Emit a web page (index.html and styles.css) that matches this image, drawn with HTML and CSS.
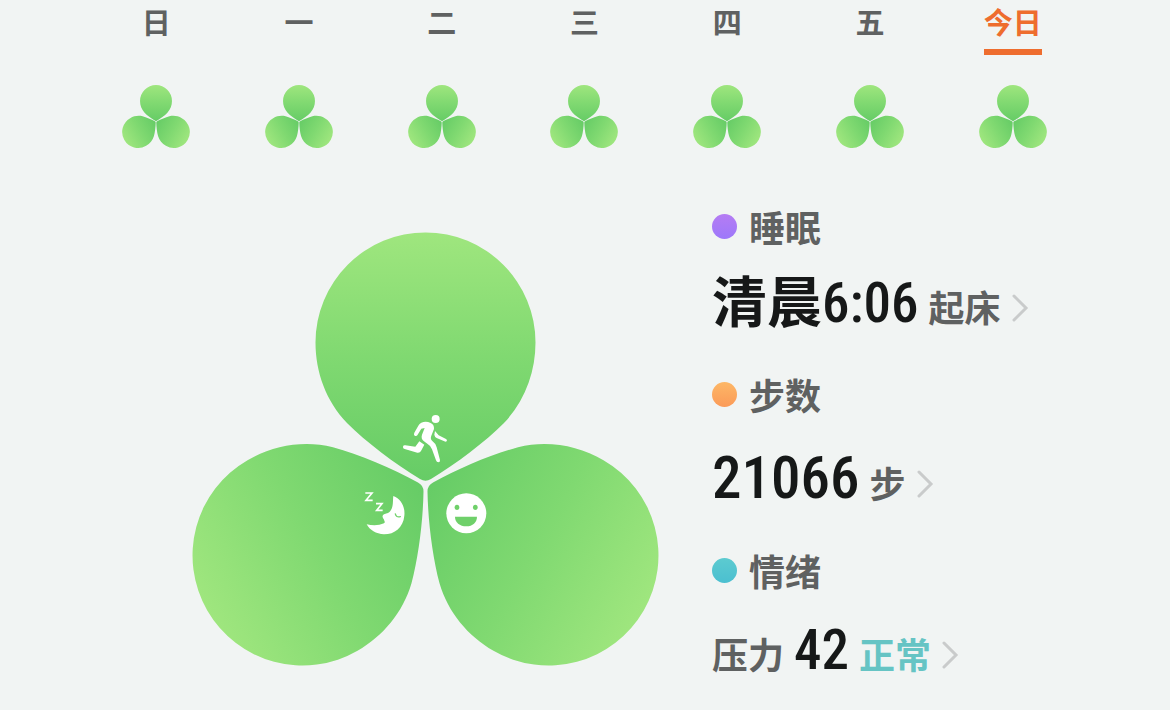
FILE: index.html
```html
<!DOCTYPE html>
<html lang="zh-CN">
<head>
<meta charset="utf-8">
<meta name="viewport" content="width=device-width, initial-scale=1">
<title>健康三叶草</title>
<link rel="stylesheet" href="styles.css">
</head>
<body>
<svg class="defs" width="0" height="0" aria-hidden="true">
  <defs>
    <linearGradient id="leaf" gradientUnits="userSpaceOnUse" x1="0" y1="232" x2="0" y2="482">
      <stop offset="0" stop-color="#9fe67e"/>
      <stop offset="0.5" stop-color="#80d971"/>
      <stop offset="1" stop-color="#66cc66"/>
    </linearGradient>
    <path id="petal" fill="url(#leaf)" d="M315.500 342.500A110 110 0 0 1 535.500 342.500C535.500 372 525 401 504 423C485 442 456 464 431 479Q425.500 482.500 420 479C395 464 366 442 347 423C326 401 315.500 372 315.500 342.500Z"/>
    <symbol id="clover" viewBox="192 232 467 434">
      <use href="#petal"/>
      <use href="#petal" transform="rotate(120 425.500 484.500)"/>
      <use href="#petal" transform="rotate(240 425.500 484.500)"/>
    </symbol>
  </defs>
</svg>

<nav class="week" aria-label="星期">
  <button class="day" type="button"><span class="day-name">日</span><svg class="day-clover" aria-hidden="true"><use href="#clover"/></svg></button>
  <button class="day" type="button"><span class="day-name">一</span><svg class="day-clover" aria-hidden="true"><use href="#clover"/></svg></button>
  <button class="day" type="button"><span class="day-name">二</span><svg class="day-clover" aria-hidden="true"><use href="#clover"/></svg></button>
  <button class="day" type="button"><span class="day-name">三</span><svg class="day-clover" aria-hidden="true"><use href="#clover"/></svg></button>
  <button class="day" type="button"><span class="day-name">四</span><svg class="day-clover" aria-hidden="true"><use href="#clover"/></svg></button>
  <button class="day" type="button"><span class="day-name">五</span><svg class="day-clover" aria-hidden="true"><use href="#clover"/></svg></button>
  <button class="day day-today" type="button" aria-current="date"><span class="day-name">今日</span><svg class="day-clover" aria-hidden="true"><use href="#clover"/></svg></button>
</nav>

<main class="overview">
  <svg class="big-clover" viewBox="192 232 467 434" role="img" aria-label="三叶草">
    <use href="#petal"/>
    <use href="#petal" transform="rotate(120 425.500 484.500)"/>
    <use href="#petal" transform="rotate(240 425.500 484.500)"/>
    <g transform="translate(340 400) scale(0.3333)" fill="#fff">
      <!-- runner -->
      <circle cx="287" cy="57" r="12"/>
      <path d="M244 68Q258 62 272 69Q283 74 282 87L274 107Q270 117 277 123Q287 130 290 142L300 180Q301 187 295 187Q290 187 288 181L276 148Q272 137 263 132L252 124Q242 116 246 104L254 84L244 86L232 106Q229 110 224 107Q220 104 223 98L235 77Q238 71 244 68Z"/>
      <path d="M285 93L296 106L318 117Q323 120 320 124Q317 126 313 124L290 114Q284 111 283 104Z"/>
      <path d="M238 124L253 134L243 153Q240 159 232 158L194 147Q188 145 189 140Q190 135 196 136L226 140Z"/>
      <!-- sleeping moon -->
      <path d="M160 288C184 297 196 322 193 347C190 382 164 403 132 403C108 402 89 390 80 373C98 377 117 377 132 370C136 367 134 364 132 360C133 357 126 353 128 347C131 340 145 342 151 333C161 320 158 304 160 288Z"/>
      <path d="M166 342Q168 353 181 350" fill="none" stroke="#70d16a" stroke-width="4" stroke-linecap="round"/>
      <path d="M76 279H96L78 301H98M108 311H126L110 331H128" fill="none" stroke="#fff" stroke-width="5"/>
      <!-- smiling face -->
      <circle cx="379" cy="340" r="60"/>
      <g fill="#6fd06a">
        <ellipse cx="351" cy="322" rx="7" ry="8"/>
        <ellipse cx="406" cy="322" rx="7" ry="8"/>
        <path d="M345 350H411C411 367 398 379 379 379C359 379 345 367 345 350Z"/>
      </g>
    </g>
  </svg>

  <div class="metrics">
    <section class="metric">
      <h2 class="metric-title"><span class="dot dot-sleep"></span>睡眠</h2>
      <a class="metric-value" href="#sleep">
        <span class="reading"><strong class="period">清晨</strong><span class="number">6:06</span></span>
        <span class="unit">起床</span>
        <svg class="chevron" viewBox="0 0 18 28" aria-hidden="true"><path d="M3 2L15 14L3 26"/></svg>
      </a>
    </section>
    <section class="metric">
      <h2 class="metric-title"><span class="dot dot-steps"></span>步数</h2>
      <a class="metric-value" href="#steps">
        <span class="number number-large">21066</span>
        <span class="unit">步</span>
        <svg class="chevron" viewBox="0 0 18 28" aria-hidden="true"><path d="M3 2L15 14L3 26"/></svg>
      </a>
    </section>
    <section class="metric">
      <h2 class="metric-title"><span class="dot dot-mood"></span>情绪</h2>
      <a class="metric-value" href="#mood">
        <span class="unit">压力</span>
        <span class="number">42</span>
        <span class="unit unit-normal">正常</span>
        <svg class="chevron" viewBox="0 0 18 28" aria-hidden="true"><path d="M3 2L15 14L3 26"/></svg>
      </a>
    </section>
  </div>
</main>
</body>
</html>
```
FILE: styles.css
```css
* {
  box-sizing: border-box;
}

body {
  margin: 0;
  background: #f1f4f3;
  color: #161818;
  font-family: "Noto Sans CJK SC", sans-serif;
}

.defs {
  position: absolute;
}

.week {
  display: grid;
  grid-template-columns: repeat(7, 1fr);
  padding: 0 86px 0 85px;
}

.day {
  display: flex;
  flex-direction: column;
  align-items: center;
  gap: 30px;
  padding: 0;
  border: 0;
  background: none;
  color: #5f6161;
  font: inherit;
}

.day-name {
  height: 55px;
  border-bottom: 6px solid transparent;
  font-size: 29px;
  font-weight: 700;
  line-height: 42px;
}

.day-today .day-name {
  border-color: #ee6d2e;
  color: #ee6d2e;
}

.day-clover {
  width: 68px;
  height: 63px;
}

.overview {
  display: grid;
  grid-template-columns: 467px 1fr;
  column-gap: 53px;
  padding: 54px 85px 0 192px;
}

.big-clover {
  width: 100%;
  margin-top: 30px;
}

.metrics {
  display: flex;
  flex-direction: column;
  gap: 18px;
}

.metric-title {
  display: flex;
  align-items: center;
  gap: 12px;
  margin: 0 0 2px;
  color: #5f6161;
  font-size: 36px;
  font-weight: 700;
  line-height: 48px;
}

.metric + .metric .metric-title {
  margin-bottom: 10px;
}

.dot {
  width: 25px;
  height: 25px;
  border-radius: 50%;
}

.dot-sleep {
  background: linear-gradient(#b57cf3, #9d78fa);
}

.dot-steps {
  background: linear-gradient(#fdb766, #fb9a58);
}

.dot-mood {
  background: linear-gradient(#5ccbd0, #4bbfd0);
}

.metric-value {
  display: flex;
  align-items: baseline;
  gap: 10px;
  color: inherit;
  line-height: 92px;
  text-decoration: none;
  white-space: nowrap;
}

.reading {
  display: flex;
  align-items: baseline;
}

.period {
  font-size: 55px;
  font-weight: 700;
}

.number {
  font-family: "Roboto Condensed", "Noto Sans CJK SC", sans-serif;
  font-size: 55px;
  font-weight: 500;
}

.number-large {
  font-size: 59px;
  line-height: 100px;
}

.unit {
  color: #5f6161;
  font-size: 36px;
  font-weight: 700;
}

.unit-normal {
  color: #66c4c4;
}

.chevron {
  width: 18px;
  height: 28px;
  fill: none;
  stroke: #c9cbcb;
  stroke-width: 3;
  stroke-linecap: round;
}
```
